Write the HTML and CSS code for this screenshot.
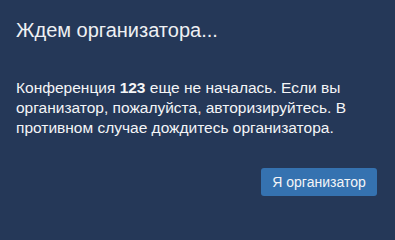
FILE: index.html
```html
<!DOCTYPE html>
<html lang="ru">
<head>
<meta charset="utf-8">
<link rel="stylesheet" href="styles.css">
</head>
<body>
<div class="dialog">
  <h4 class="title">Ждем организатора...</h4>
  <p class="body">Конференция <strong>123</strong> еще не началась. Если вы организатор, пожалуйста, авторизируйтесь. В противном случае дождитесь организатора.</p>
  <div class="footer">
    <button class="btn">Я организатор</button>
  </div>
</div>
</body>
</html>
```

FILE: styles.css
```css
html, body {
  margin: 0;
  padding: 0;
  background: #253858;
}
body {
  width: 395px;
  height: 200px;
  overflow: hidden;
  font-family: "Liberation Sans", Arial, sans-serif;
  color: #f4f5f7;
}
.dialog {
  display: flex;
  flex-direction: column;
  padding: 18px 18px 0 16px;
}
.title {
  margin: 0;
  font-size: 20px;
  line-height: 24px;
  font-weight: 400;
  color: #eef0f3;
}
.body {
  margin: 36px 0 0 0;
  font-size: 15.5px;
  line-height: 20px;
  color: #f4f5f7;
}
.body strong {
  font-weight: 700;
}
.footer {
  display: flex;
  justify-content: flex-end;
  margin-top: 30px;
}
.btn {
  height: 28px;
  width: 116px;
  padding: 0;
  border: none;
  border-radius: 3px;
  background: #3572b0;
  color: #f4f5f7;
  font-family: "Liberation Sans", Arial, sans-serif;
  font-size: 14px;
  line-height: 28px;
}
```
